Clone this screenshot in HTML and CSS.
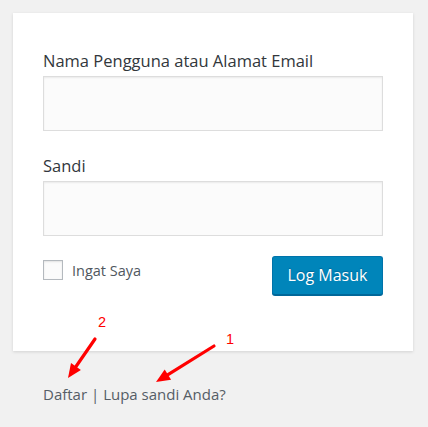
FILE: index.html
```html
<!DOCTYPE html>
<html lang="id">
<head>
<meta charset="utf-8">
<title>Log Masuk</title>
<link rel="stylesheet" href="styles.css">
</head>
<body>
<div class="page">
  <form class="card">
    <label class="label" for="user">Nama Pengguna atau Alamat Email</label>
    <input class="input" id="user" type="text">
    <label class="label" for="pass">Sandi</label>
    <input class="input" id="pass" type="password">
    <div class="row">
      <label class="remember"><input class="check" type="checkbox"><span>Ingat Saya</span></label>
      <button class="btn" type="button">Log Masuk</button>
    </div>
  </form>
  <p class="nav"><a href="#">Daftar</a> | <a href="#">Lupa sandi Anda?</a></p>
  <svg class="annot" width="428" height="427" viewBox="0 0 428 427">
    <g fill="#ff0000" stroke="none">
      <text x="98" y="327" class="num">2</text>
      <text x="226" y="344" class="num">1</text>
      <polygon points="68,378 80.9,369.9 71,363.1"/>
      <polygon points="156,382 171.1,379.7 164.7,369.5"/>
    </g>
    <g stroke="#ff0000" stroke-width="3.2" stroke-linecap="round">
      <line x1="95" y1="339" x2="76" y2="366.5"/>
      <line x1="214" y1="346" x2="168" y2="374.6"/>
    </g>
  </svg>
</div>
</body>
</html>
```

FILE: styles.css
```css
html, body {
  margin: 0;
  padding: 0;
  background: #f1f1f1;
}
body {
  font-family: "Open Sans", "Noto Sans", sans-serif;
  color: #444;
}
.page {
  position: relative;
  width: 428px;
  height: 427px;
  padding: 13px 0 0 13px;
  box-sizing: border-box;
  overflow: hidden;
}
.card {
  width: 400px;
  box-sizing: border-box;
  margin: 0;
  padding: 38px 30px 56px;
  background: #fff;
  box-shadow: 0 1px 3px rgba(0,0,0,.13);
}
.label {
  display: block;
  font-size: 16.5px;
  line-height: 20px;
  color: #32373c;
  margin-bottom: 5px;
}
.input {
  display: block;
  width: 100%;
  height: 55px;
  box-sizing: border-box;
  margin: 0 0 25px;
  border: 1px solid #ddd;
  background: #fbfbfb;
  box-shadow: inset 0 1px 2px rgba(0,0,0,.07);
  outline: none;
  font-size: 24px;
}
.input:last-of-type {
  margin-bottom: 0;
}
.row {
  display: flex;
  justify-content: space-between;
  align-items: flex-start;
  margin-top: 20px;
}
.remember {
  display: flex;
  align-items: center;
  margin-top: 4px;
  font-size: 14.5px;
  color: #50575e;
}
.check {
  appearance: none;
  -webkit-appearance: none;
  width: 20px;
  height: 20px;
  margin: 0 9px 0 0;
  box-sizing: border-box;
  border: 1px solid #b4b9be;
  background: #fbfbfb;
  box-shadow: inset 0 1px 2px rgba(0,0,0,.1);
}
.btn {
  width: 111px;
  height: 39px;
  box-sizing: border-box;
  border: 1px solid #0073aa;
  border-bottom-color: #006799;
  border-radius: 3px;
  background: #0085ba;
  box-shadow: 0 1px 0 #006799;
  color: #fff;
  font-family: inherit;
  font-size: 16px;
  padding: 0 0 1px;
  text-shadow: 0 -1px 1px #006799;
}
.nav {
  margin: 33px 0 0;
  padding-left: 30px;
  font-size: 15px;
  line-height: 20px;
  color: #555d66;
}
.nav a {
  color: #555d66;
  text-decoration: none;
}
.annot {
  position: absolute;
  left: 0;
  top: 0;
}
.num {
  font-family: "Liberation Sans", sans-serif;
  font-size: 14.5px;
}
```
